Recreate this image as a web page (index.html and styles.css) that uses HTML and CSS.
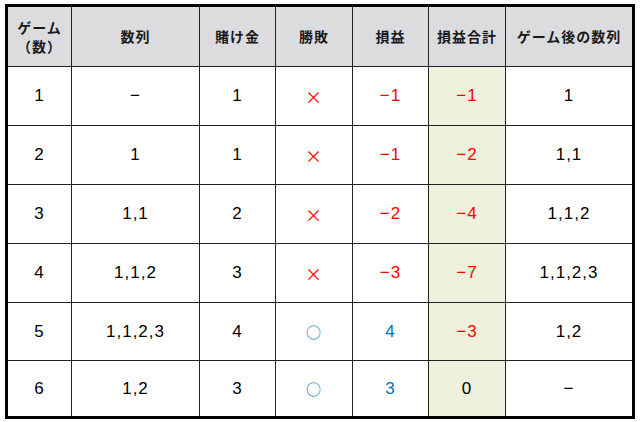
FILE: index.html
```html
<!DOCTYPE html>
<html lang="ja">
<head>
<meta charset="utf-8">
<link rel="stylesheet" href="styles.css">
</head>
<body>
<table class="grid">
  <colgroup>
    <col class="c1"><col class="c2"><col class="c3"><col class="c4"><col class="c5"><col class="c6"><col class="c7">
  </colgroup>
  <thead>
    <tr class="head">
      <th><span class="ln">ゲーム</span><span class="ln">（数）</span></th>
      <th>数列</th>
      <th>賭け金</th>
      <th>勝敗</th>
      <th>損益</th>
      <th>損益合計</th>
      <th>ゲーム後の数列</th>
    </tr>
  </thead>
  <tbody>
    <tr class="r">
      <td>1</td><td>−</td><td>1</td><td class="red mark">×</td><td class="red">−1</td><td class="sum red">−1</td><td>1</td>
    </tr>
    <tr class="r">
      <td>2</td><td>1</td><td>1</td><td class="red mark">×</td><td class="red">−1</td><td class="sum red">−2</td><td>1,1</td>
    </tr>
    <tr class="r">
      <td>3</td><td>1,1</td><td>2</td><td class="red mark">×</td><td class="red">−2</td><td class="sum red">−4</td><td>1,1,2</td>
    </tr>
    <tr class="r">
      <td>4</td><td>1,1,2</td><td>3</td><td class="red mark">×</td><td class="red">−3</td><td class="sum red">−7</td><td>1,1,2,3</td>
    </tr>
    <tr class="r r5">
      <td>5</td><td>1,1,2,3</td><td>4</td><td class="blue mark circ">○</td><td class="blue">4</td><td class="sum red">−3</td><td>1,2</td>
    </tr>
    <tr class="r r6">
      <td>6</td><td>1,2</td><td>3</td><td class="blue mark circ">○</td><td class="blue">3</td><td class="sum">0</td><td>−</td>
    </tr>
  </tbody>
</table>
</body>
</html>
```
FILE: styles.css
```css
html, body {
  margin: 0;
  padding: 0;
  background: #ffffff;
}
body {
  padding: 4px 0 0 5px;
}
.grid {
  border-collapse: separate;
  border-spacing: 0;
  border: 3px solid #000;
  table-layout: fixed;
  width: 630px;
  font-family: "Liberation Sans", "Noto Sans CJK JP", sans-serif;
  color: #000;
}
.c1 { width: 64px; }
.c2 { width: 128px; }
.c3 { width: 76px; }
.c4 { width: 77px; }
.c5 { width: 76px; }
.c6 { width: 77px; }
.c7 { width: 126px; }
.grid th, .grid td {
  padding: 0;
  text-align: center;
  vertical-align: middle;
  border-right: 1px solid #222;
  border-bottom: 1px solid #222;
}
.grid th:last-child, .grid td:last-child {
  border-right: none;
}
.grid tbody tr:last-child td {
  border-bottom: none;
}
.head th {
  height: 59px;
  background: #dcdcdf;
  font-family: "Noto Sans CJK JP", sans-serif;
  font-weight: bold;
  font-size: 14px;
  letter-spacing: 1px;
  line-height: 19px;
  color: #1a1a1a;
}
.ln {
  display: block;
  height: 19px;
  line-height: 19px;
}
.r td {
  height: 58px;
  font-size: 17px;
  letter-spacing: 1px;
}
.r5 td { height: 57px; }
.r6 td { height: 55px; }
.sum {
  background: #eef1dc;
}
.red { color: #ff0000; }
.blue { color: #0070c0; }
.mark {
  font-family: "Noto Sans CJK JP", sans-serif;
  font-size: 15px;
}
.r td.circ {
  font-size: 15px;
}
```
